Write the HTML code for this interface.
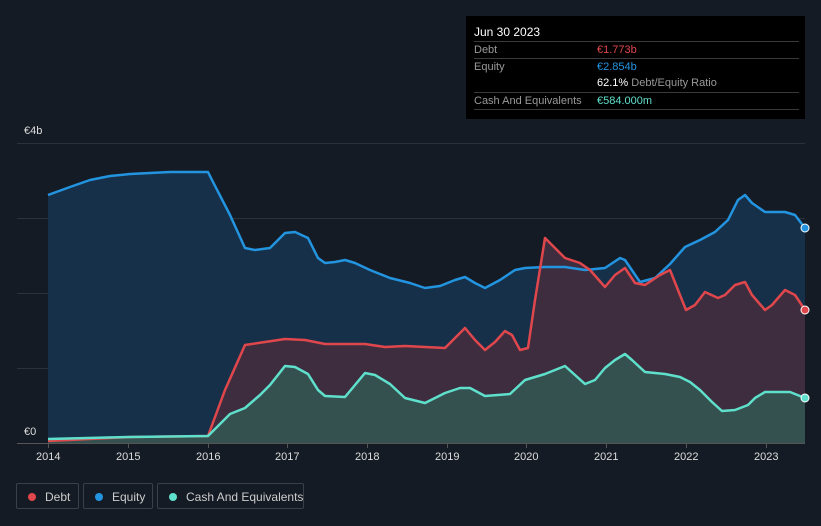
<!DOCTYPE html>
<html><head><style>
body{margin:0;width:821px;height:526px;background:#151b24;font-family:"Liberation Sans",sans-serif;overflow:hidden;position:relative}
.tt{position:absolute;left:466px;top:16px;width:339px;height:103px;background:#000;color:#fff;font-size:11px}
.tt .r{position:absolute;left:8px;right:6px;border-top:1px solid #3a3a3a;height:16px;line-height:16px;color:#999}
.tt .v{position:absolute;left:123px}
.lg{position:absolute;top:483px;height:26px;border:1px solid #3a404a;border-radius:2px;color:#ccc;font-size:12px;line-height:26px;box-sizing:border-box;white-space:nowrap}
.lg i{position:absolute;left:11px;top:9px;width:8px;height:8px;border-radius:50%}
.ax{position:absolute;color:#ddd;font-size:11px}
</style></head><body>
<svg width="821" height="526" style="position:absolute;left:0;top:0">
<g stroke="#2c323c" stroke-width="1">
<line x1="17" y1="143.5" x2="805" y2="143.5"/><line x1="17" y1="218.5" x2="805" y2="218.5"/><line x1="17" y1="293.5" x2="805" y2="293.5"/><line x1="17" y1="368.5" x2="805" y2="368.5"/><line x1="17" y1="443.5" x2="805" y2="443.5" stroke="#555"/>
</g>
<path fill="#173049" d="M48,195 L70,187 90,180 110,176 130,174 170,172 208,172 212,180 230,215 245,248 255,250 270,248 285,233 295,232 308,238 318,258 325,263 335,262 345,260 355,263 370,270 390,278 410,283 425,288 440,286 455,280 465,277 475,283 485,288 500,280 515,270 525,268 545,267 565,267 585,270 605,268 620,258 625,260 640,282 655,278 670,264 685,247 700,240 715,232 728,220 738,200 745,195 752,203 765,212 785,212 795,215 805,228 L805,443 48,443Z"/>
<path fill="#3e2d3e" d="M48,441 L130,437 208,436 225,390 245,345 265,342 285,339 305,340 325,344 365,344 385,347 405,346 445,348 455,338 465,328 475,340 485,350 495,342 505,331 512,335 520,350 528,348 535,300 545,238 555,248 565,258 580,263 590,270 605,287 615,275 625,268 635,283 645,285 660,275 670,270 678,290 686,310 695,305 705,292 718,298 725,295 735,285 745,282 752,295 765,310 772,305 785,290 795,295 805,310 L805,443 48,443Z"/>
<path fill="#34514f" d="M48,439 L130,437 208,436 230,414 245,408 260,395 270,385 285,366 295,367 308,374 318,390 325,396 345,397 355,385 365,373 375,375 390,384 405,398 425,403 445,393 460,388 470,388 485,396 510,394 525,380 545,374 555,370 565,366 575,375 585,384 595,380 605,368 615,360 625,354 632,360 645,372 665,374 680,377 690,382 700,390 712,402 722,411 735,410 748,405 755,398 765,392 790,392 805,398 L805,443 48,443Z"/>
<g fill="none" stroke-width="2.5" stroke-linejoin="round">
<polyline stroke="#2394e0" points="48,195 70,187 90,180 110,176 130,174 170,172 208,172 212,180 230,215 245,248 255,250 270,248 285,233 295,232 308,238 318,258 325,263 335,262 345,260 355,263 370,270 390,278 410,283 425,288 440,286 455,280 465,277 475,283 485,288 500,280 515,270 525,268 545,267 565,267 585,270 605,268 620,258 625,260 640,282 655,278 670,264 685,247 700,240 715,232 728,220 738,200 745,195 752,203 765,212 785,212 795,215 805,228"/>
<polyline stroke="#e0474c" points="48,441 130,437 208,436 225,390 245,345 265,342 285,339 305,340 325,344 365,344 385,347 405,346 445,348 455,338 465,328 475,340 485,350 495,342 505,331 512,335 520,350 528,348 535,300 545,238 555,248 565,258 580,263 590,270 605,287 615,275 625,268 635,283 645,285 660,275 670,270 678,290 686,310 695,305 705,292 718,298 725,295 735,285 745,282 752,295 765,310 772,305 785,290 795,295 805,310"/>
<polyline stroke="#5fe0cc" points="48,439 130,437 208,436 230,414 245,408 260,395 270,385 285,366 295,367 308,374 318,390 325,396 345,397 355,385 365,373 375,375 390,384 405,398 425,403 445,393 460,388 470,388 485,396 510,394 525,380 545,374 555,370 565,366 575,375 585,384 595,380 605,368 615,360 625,354 632,360 645,372 665,374 680,377 690,382 700,390 712,402 722,411 735,410 748,405 755,398 765,392 790,392 805,398"/>
</g>
<circle cx="805" cy="228" r="4" fill="#2394e0" stroke="#fff" stroke-width="1"/>
<circle cx="805" cy="310" r="4" fill="#e0474c" stroke="#fff" stroke-width="1"/>
<circle cx="805" cy="398" r="4" fill="#5fe0cc" stroke="#fff" stroke-width="1"/>
<g stroke="#555"><line x1="48.5" y1="443" x2="48.5" y2="448"/><line x1="128.5" y1="443" x2="128.5" y2="448"/><line x1="208.5" y1="443" x2="208.5" y2="448"/><line x1="287.5" y1="443" x2="287.5" y2="448"/><line x1="367.5" y1="443" x2="367.5" y2="448"/><line x1="447.5" y1="443" x2="447.5" y2="448"/><line x1="526.5" y1="443" x2="526.5" y2="448"/><line x1="606.5" y1="443" x2="606.5" y2="448"/><line x1="686.5" y1="443" x2="686.5" y2="448"/><line x1="766.5" y1="443" x2="766.5" y2="448"/></g>
</svg>
<div class="ax" style="left:24px;top:125px">€4b</div>
<div class="ax" style="left:24px;top:426px">€0</div>
<div class="ax" style="left:36px;top:451px">2014</div>
<div class="ax" style="left:116px;top:451px">2015</div>
<div class="ax" style="left:196px;top:451px">2016</div>
<div class="ax" style="left:275px;top:451px">2017</div>
<div class="ax" style="left:355px;top:451px">2018</div>
<div class="ax" style="left:435px;top:451px">2019</div>
<div class="ax" style="left:514px;top:451px">2020</div>
<div class="ax" style="left:594px;top:451px">2021</div>
<div class="ax" style="left:674px;top:451px">2022</div>
<div class="ax" style="left:754px;top:451px">2023</div>
<div class="tt">
<div style="position:absolute;left:8px;top:9px;font-size:12px">Jun 30 2023</div>
<div class="r" style="top:25px">Debt<span class="v" style="color:#e0474c">€1.773b</span></div>
<div class="r" style="top:42px">Equity<span class="v" style="color:#2394e0">€2.854b</span></div>
<div class="r" style="top:59px;border-top:none"><span class="v" style="color:#999"><b style="color:#fff;font-weight:normal">62.1%</b> Debt/Equity Ratio</span></div>
<div class="r" style="top:76px">Cash And Equivalents<span class="v" style="color:#5fe0cc">€584.000m</span></div>
<div class="r" style="top:93px;height:0"></div>
</div>
<div class="lg" style="left:16px;width:63px"><i style="background:#e0474c"></i><span style="position:absolute;left:28px">Debt</span></div>
<div class="lg" style="left:83px;width:70px"><i style="background:#2394e0"></i><span style="position:absolute;left:28px">Equity</span></div>
<div class="lg" style="left:157px;width:147px"><i style="background:#5fe0cc"></i><span style="position:absolute;left:28px">Cash And Equivalents</span></div>
</body></html>
